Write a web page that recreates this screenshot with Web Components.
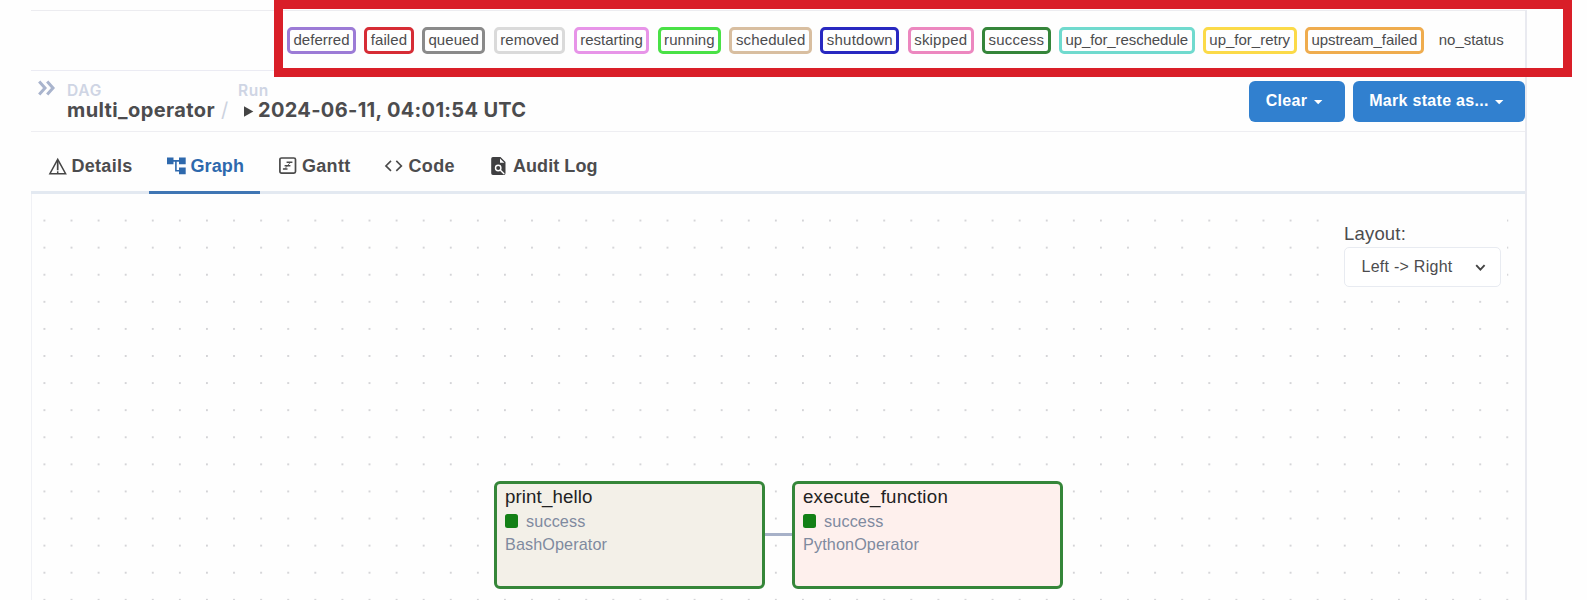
<!DOCTYPE html>
<html lang="en">
<head>
<meta charset="utf-8">
<title>multi_operator</title>
<style>
html,body{margin:0;height:600px;overflow:hidden;background:#fefefe}
body{font-family:"Liberation Sans",Arial,sans-serif;color:#4c4c4e}
</style>
</head>
<body>
<dag-page></dag-page>
<script>
function define(name, html, ready) {
  const t = document.createElement('template');
  t.innerHTML = html;
  customElements.define(name, class extends HTMLElement {
    connectedCallback() {
      if (this.shadowRoot) return;
      this.attachShadow({mode: 'open'}).appendChild(t.content.cloneNode(true));
      if (ready) ready(this, this.shadowRoot);
    }
  });
}

// A single line of text tracked so that it fills the width given in "w".
define('fit-text', `<style>:host{display:block;white-space:nowrap}span{display:inline-block;vertical-align:top}</style><span><slot></slot></span>`,
  (el, root) => {
    const w = +el.getAttribute('w'), span = root.querySelector('span');
    el.style.width = w + 'px';
    span.style.letterSpacing = (w - span.getBoundingClientRect().width) / el.textContent.length + 'px';
  });

define('state-chip', `<style>
:host{display:block;box-sizing:border-box;height:27px;border:3px solid var(--c);border-radius:5px;font-size:15px;line-height:20px;padding-left:3.5px}
</style><fit-text></fit-text>`, (el, root) => {
    const w = +el.getAttribute('width'), f = root.querySelector('fit-text');
    el.style.width = w + 'px';
    el.style.setProperty('--c', el.getAttribute('color'));
    const n = document.createElement('fit-text');
    n.setAttribute('w', w - 13);
    n.textContent = el.getAttribute('label');
    f.replaceWith(n);
  });

define('state-legend', `<style>
:host{display:flex;box-sizing:border-box;height:61px;border-top:1.5px solid #ececf0;border-bottom:1.5px solid #ebebf3;padding:16px 0 0 256px;gap:8.3px}
</style>
<state-chip label="deferred" width="69" color="#9c7bd6"></state-chip>
<state-chip label="failed" width="49.3" color="#d62c35"></state-chip>
<state-chip label="queued" width="63.6" color="#8a8a8a"></state-chip>
<state-chip label="removed" width="71.6" color="#dadada"></state-chip>
<state-chip label="restarting" width="75.6" color="#e794e8"></state-chip>
<state-chip label="running" width="63.6" color="#49e146"></state-chip>
<state-chip label="scheduled" width="82.5" color="#d8bea0"></state-chip>
<state-chip label="shutdown" width="79.2" color="#2828c0"></state-chip>
<state-chip label="skipped" width="66" color="#ec87bf"></state-chip>
<state-chip label="success" width="68.6" color="#35853a"></state-chip>
<state-chip label="up_for_reschedule" width="135.6" color="#70dace"></state-chip>
<state-chip label="up_for_retry" width="93.8" color="#fbda48"></state-chip>
<state-chip label="upstream_failed" width="119" color="#efac4e"></state-chip>
<state-chip label="no_status" width="78" color="transparent"></state-chip>`);

define('highlight-frame', `<style>
:host{position:absolute;left:274px;top:0;width:1298px;height:76.5px;box-sizing:border-box;border:9px solid #d91e28;pointer-events:none}
</style>`);

define('action-button', `<style>
:host{display:flex;align-items:flex-start;box-sizing:border-box;height:41px;border-radius:6px;background:#3180cf;color:#fff;font-weight:700;font-size:16px;line-height:40px;padding-left:16.5px;gap:6.5px}
svg{margin-top:19px}
</style><slot></slot><svg width="9" height="5" viewBox="0 0 9 5"><path d="M0 0h8.4L4.2 4.3z" fill="#fff"/></svg>`);

define('run-header', `<style>
:host{display:flex;box-sizing:border-box;height:61px;border-bottom:1.5px solid #eeeef2;font-family:Inter,sans-serif;font-weight:700}
.exp{width:36px;padding:9px 0 0 7px;box-sizing:border-box}
.col{padding-top:10px}
.cap{font-size:15.5px;line-height:19px;color:#cfd5e4;font-weight:600}
.val{font-size:20px;line-height:20px;display:flex}
.dag{width:171px}.run{flex:1}
.sl{color:#ccd2de;font-weight:400;padding-left:6px}
.tri{margin:5.5px 4px 0 6px}
.btns{display:flex;gap:8px;padding-top:9.5px;font-family:"Liberation Sans",Arial,sans-serif}
</style>
<div class="exp"><svg width="18" height="16" viewBox="0 0 18 16" fill="none" stroke="#a9b4cd" stroke-width="3"><path d="M1.2 1.4 7 7.9l-5.8 6.5M9.2 1.4 15 7.9l-5.8 6.5"/></svg></div>
<div class="col dag"><fit-text class="cap" w="35">DAG</fit-text><div class="val"><fit-text w="148">multi_operator</fit-text><span class="sl">/</span></div></div>
<div class="col run"><fit-text class="cap" w="31">Run</fit-text><div class="val"><svg class="tri" width="10" height="11" viewBox="0 0 10 11"><path d="M0 .2 9.3 5.5 0 10.8z" fill="#444"/></svg><fit-text w="268.5">2024-06-11, 04:01:54 UTC</fit-text></div></div>
<div class="btns">
<action-button style="width:95.5px"><fit-text w="41.5">Clear</fit-text></action-button>
<action-button style="width:172.3px"><fit-text w="119.5">Mark state as...</fit-text></action-button>
</div>`);

define('tab-item', `<style>
:host{display:flex;box-sizing:border-box;height:62px;font-weight:700;font-size:18px;line-height:69px;border-bottom:3px solid #e3e9f1}
:host([active]){color:#2e69ad;border-bottom-color:#4076b4}
</style><slot></slot>`);

define('tab-bar', `<style>
:host{display:flex;height:62px;font-size:18px}
.fill{flex:1;border-bottom:3px solid #e3e9f1}
svg{margin-top:24.5px;flex:none;overflow:visible}
</style>
<tab-item style="width:118px;padding-left:18px"><svg style="margin-right:5px" width="17.5" height="18" viewBox="0 0 17.5 18" fill="none" stroke="#454545" stroke-width="1.5"><path d="M8.7 2.4.9 16.7h15.7z"/><path d="M8.7 3v10.3" stroke-width="1.7"/><path d="M8.7 14.3v1.8"/></svg><fit-text w="61">Details</fit-text></tab-item>
<tab-item active style="width:111px;padding-left:17.5px;box-sizing:border-box"><svg style="margin-right:5px" width="19" height="18" viewBox="0 0 19 18"><path fill="#2e69ad" d="M0 .6h6.5v6.7H0zM12 .6h6.7v6.7H12zM12 10.5h6.7v6.8H12z"/><path d="M6 3.9h6M8.9 3.9v9.9H12" fill="none" stroke="#2e69ad" stroke-width="1.6"/></svg><fit-text w="53.5">Graph</fit-text></tab-item>
<tab-item style="width:107px;padding-left:19px"><svg style="margin-right:5.5px" width="17.5" height="18" viewBox="0 0 17.5 18" fill="none" stroke="#4a4a4a" stroke-width="1.7"><rect x=".9" y="1" width="15.6" height="15.2" rx="1.6"/><path d="M7.6 5.3h5.8M5.6 8.7h5.8M3.9 12.1h4.6" stroke-width="1.5"/><path d="M11.4 5.3 5.6 12.1" stroke-width=".8"/></svg><fit-text w="48.5">Gantt</fit-text></tab-item>
<tab-item style="width:105px;padding-left:18px"><svg style="margin-right:6px" width="17.5" height="18" viewBox="0 0 17.5 18" fill="none" stroke="#4a4a4a" stroke-width="1.6"><path d="M6 3.9.9 8.9 6 13.9M11.3 3.9l5.1 5-5.1 5"/></svg><fit-text w="46.5">Code</fit-text></tab-item>
<tab-item style="width:115px;padding-left:19px"><svg style="margin-right:7px" width="15" height="18" viewBox="0 0 15 18"><path fill="#3f3f41" d="M1.9.1h7.6l5 5v11.1a1.7 1.7 0 0 1-1.7 1.7H1.9A1.7 1.7 0 0 1 .2 16.2V1.8A1.7 1.7 0 0 1 1.9.1z"/><path d="M9 1.6v4.2h4.3z" fill="#fff"/><circle cx="7.2" cy="11" r="2.7" fill="none" stroke="#fff" stroke-width="1.4"/><path d="m9.2 13 4 4" stroke="#fff" stroke-width="1.5"/></svg><fit-text w="84.5">Audit Log</fit-text></tab-item>
<div class="fill"></div>`);

define('layout-picker', `<style>
:host{display:block;box-sizing:border-box;width:173px;height:83px;background:#fefefe;padding:13px 0 0 10px}
.l{font-size:18.5px;line-height:23px}
.s{display:flex;box-sizing:border-box;width:157px;height:40px;border:1.5px solid #e8ebf1;border-radius:5px;background:#fff;padding-left:16.5px;font-size:16px;line-height:38px;margin-top:2px}
svg{margin:16px 0 0 22px}
</style><fit-text class="l" w="62">Layout:</fit-text>
<div class="s"><fit-text w="91">Left -&gt; Right</fit-text><svg width="11" height="8" viewBox="0 0 11 8" fill="none" stroke="#444" stroke-width="1.9"><path d="m1.2 1.2 4.2 4.400 4.200-4.400"/></svg></div>`);

define('task-node', `<style>
:host{position:absolute;box-sizing:border-box;width:271px;height:108px;border:3px solid #358639;border-radius:6px;padding:1px 0 0 8px;background:var(--bg)}
.t{font-size:18.7px;line-height:24px;color:#222}
.r{display:flex;gap:8px;color:#7f8a9f;font-size:16.2px;line-height:24px}
i{width:13px;height:14px;margin-top:5px;border-radius:2.5px;background:#138016}
.o{font-size:16.2px;line-height:22px;color:#7f8a9f}
</style><slot name="title" class="t"></slot>
<div class="r"><i></i><fit-text w="59.5">success</fit-text></div><slot name="op" class="o"></slot>`,
(el, root) => {
  for (const s of root.querySelectorAll('slot')) s.style.display = 'block';
});

define('graph-canvas', `<style>
:host{display:block;position:relative;height:406px;border-left:1px solid #f0f1f5}
.dots{display:block;width:1493px;height:406px}
layout-picker{position:absolute;left:1302px;top:15px}
.edge{position:absolute;left:732px;top:339px;width:29px;height:2.5px;background:#a7b1c8}
</style>
<svg class="dots"><defs><pattern id="p" x="-1.1" y="13" width="27.09" height="27.09" patternUnits="userSpaceOnUse"><circle cx="13.5" cy="13.5" r="1" fill="#c9c9cd"/></pattern></defs><rect y="10" width="1493" height="396" fill="url(#p)"/></svg>
<layout-picker></layout-picker>
<div class="edge"></div>
<task-node style="left:462px;top:287px;--bg:#f3f0e8"><fit-text slot="title" w="87.5">print_hello</fit-text><fit-text slot="op" w="102">BashOperator</fit-text></task-node>
<task-node style="left:760px;top:287px;--bg:#fef0ed"><fit-text slot="title" w="145">execute_function</fit-text><fit-text slot="op" w="116">PythonOperator</fit-text></task-node>`);

define('dag-page', `<style>
:host{display:block;position:relative;width:1587px;height:600px;box-sizing:border-box;padding:10px 0 0 31px;overflow:hidden}
main{width:1494px;height:590px;border-right:2px solid #e9eaf0}
</style><main><state-legend></state-legend><run-header></run-header><tab-bar></tab-bar><graph-canvas></graph-canvas></main><highlight-frame></highlight-frame>`);
</script>
</body>
</html>
